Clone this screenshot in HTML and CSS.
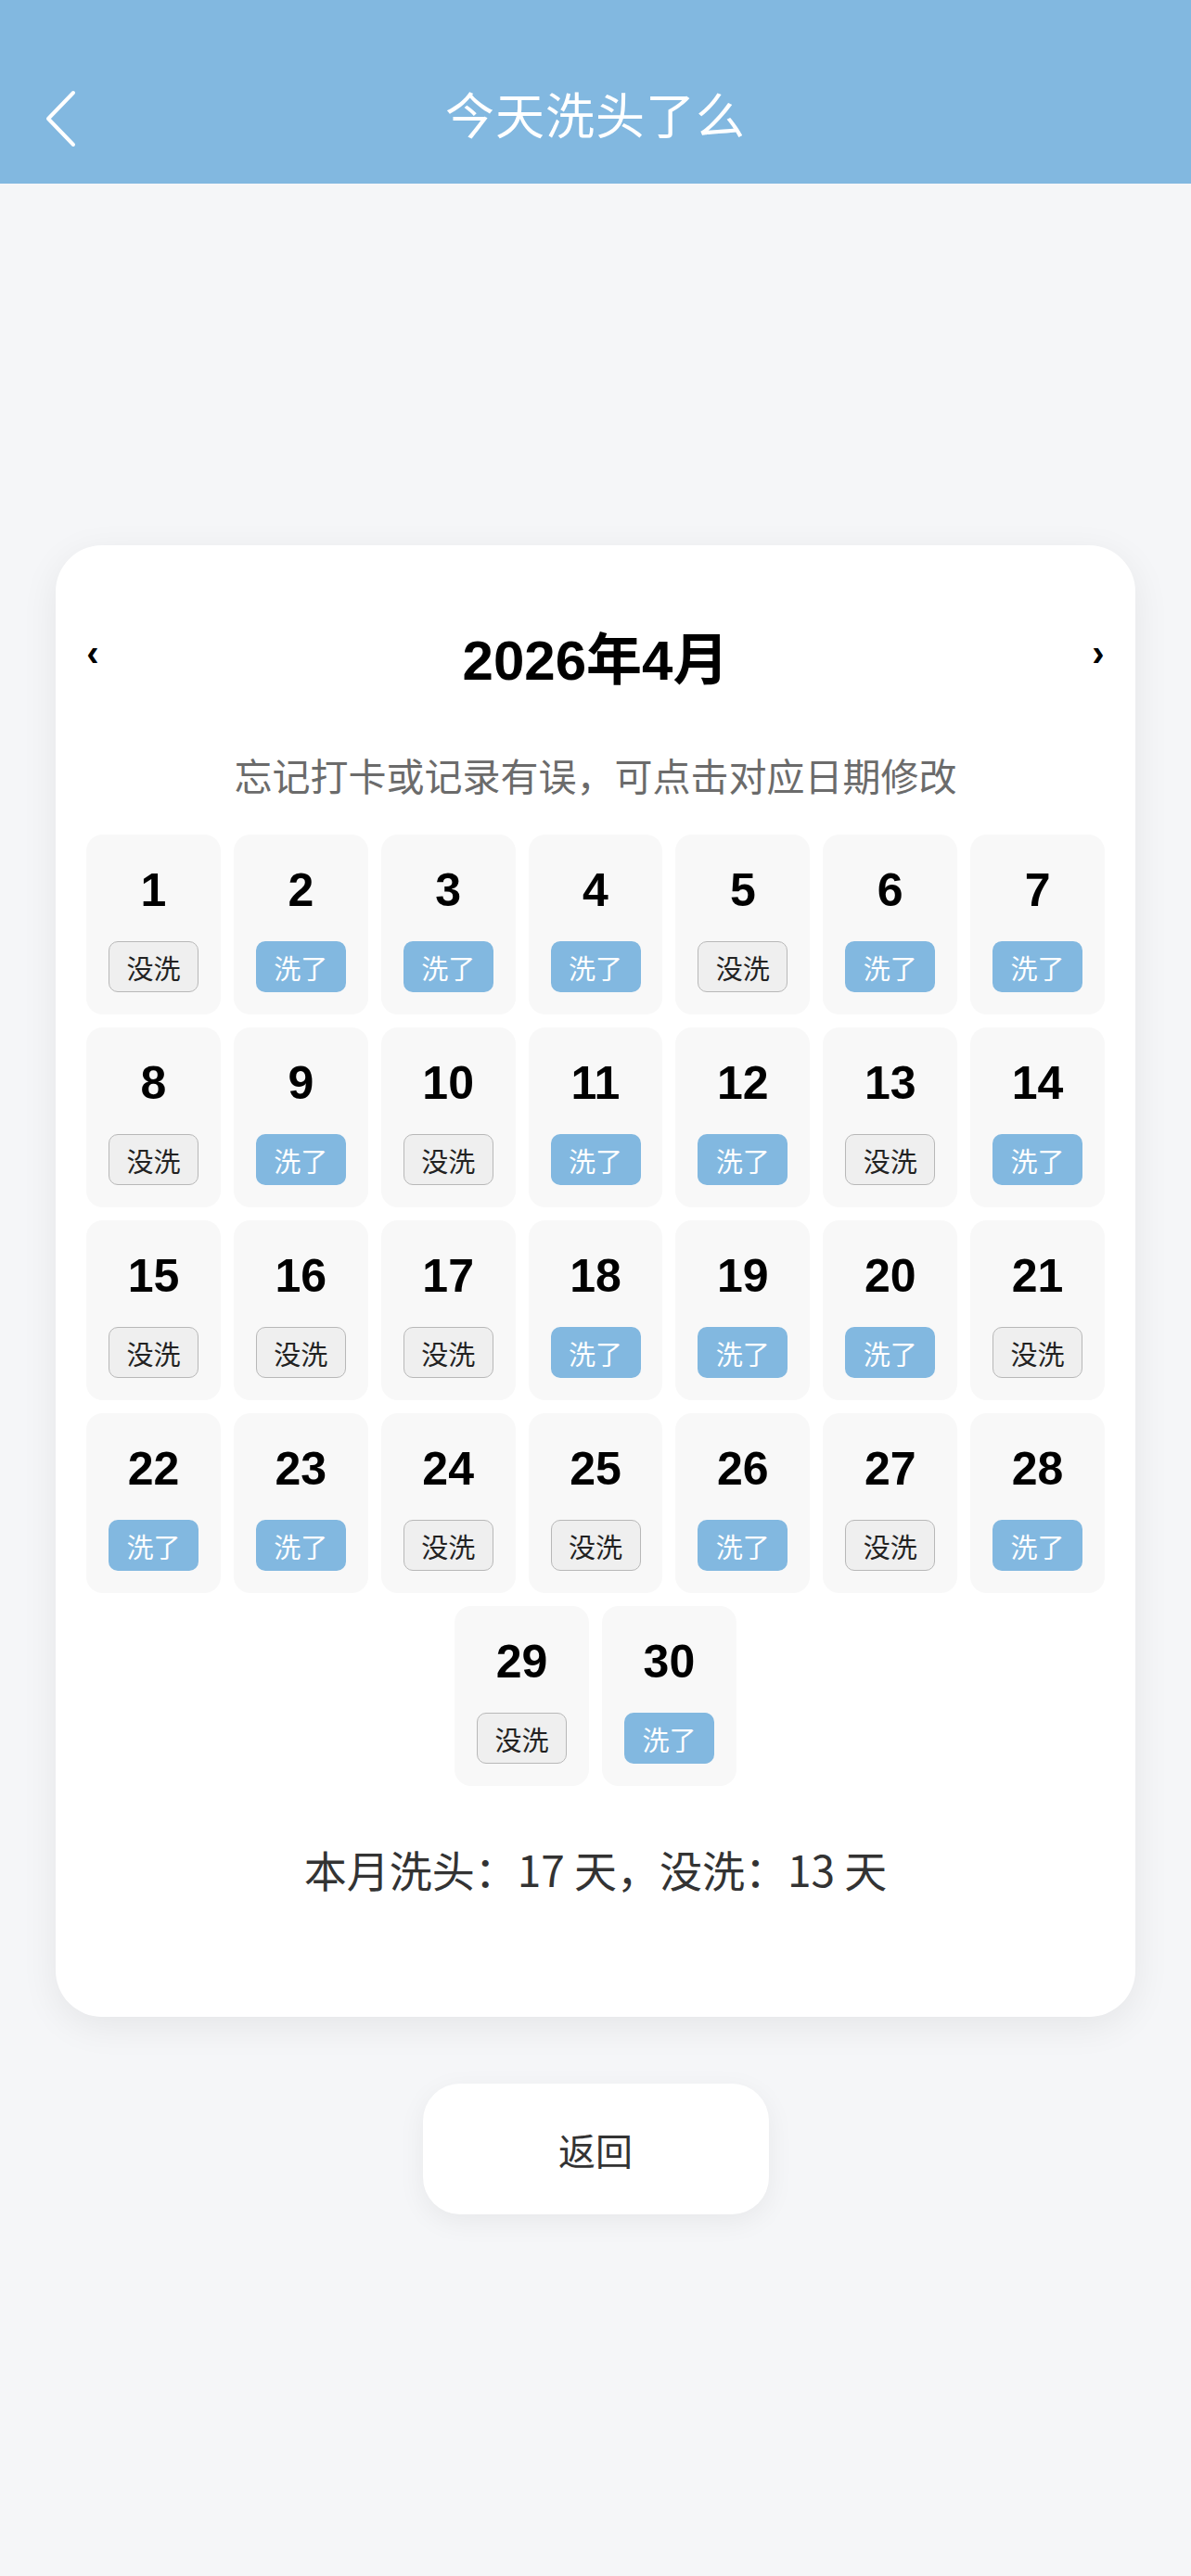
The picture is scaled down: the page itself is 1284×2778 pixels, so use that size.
FILE: index.html
```html
<!DOCTYPE html>
<html lang="zh-CN">
<head>
    <meta charset="UTF-8">
    <meta name="viewport" content="width=device-width, initial-scale=1.0">
    <title>今天洗头了么</title>
    <link rel="stylesheet" href="styles.css">
</head>
<body>
    <!-- Top Bar -->
    <div class="topbar">
        <span class="back-arrow">
            <svg width="40" height="64" viewBox="0 0 40 64"><polyline points="31,5 4,33 31,61" fill="none" stroke="#fff" stroke-width="4" stroke-linecap="round" stroke-linejoin="round"/></svg>
        </span>
        <div class="topbar-title">今天洗头了么</div>
    </div>

    <div class="page">
        <!-- Calendar Card -->
        <div class="card">
            <div class="month-row">
                <span class="month-nav">‹</span>
                <span class="month-title">2026年4月</span>
                <span class="month-nav">›</span>
            </div>
            <div class="hint">忘记打卡或记录有误，可点击对应日期修改</div>

            <div class="days">
                <div class="day"><div class="num">1</div><span class="tag no">没洗</span></div>
                <div class="day"><div class="num">2</div><span class="tag yes">洗了</span></div>
                <div class="day"><div class="num">3</div><span class="tag yes">洗了</span></div>
                <div class="day"><div class="num">4</div><span class="tag yes">洗了</span></div>
                <div class="day"><div class="num">5</div><span class="tag no">没洗</span></div>
                <div class="day"><div class="num">6</div><span class="tag yes">洗了</span></div>
                <div class="day"><div class="num">7</div><span class="tag yes">洗了</span></div>

                <div class="day"><div class="num">8</div><span class="tag no">没洗</span></div>
                <div class="day"><div class="num">9</div><span class="tag yes">洗了</span></div>
                <div class="day"><div class="num">10</div><span class="tag no">没洗</span></div>
                <div class="day"><div class="num">11</div><span class="tag yes">洗了</span></div>
                <div class="day"><div class="num">12</div><span class="tag yes">洗了</span></div>
                <div class="day"><div class="num">13</div><span class="tag no">没洗</span></div>
                <div class="day"><div class="num">14</div><span class="tag yes">洗了</span></div>

                <div class="day"><div class="num">15</div><span class="tag no">没洗</span></div>
                <div class="day"><div class="num">16</div><span class="tag no">没洗</span></div>
                <div class="day"><div class="num">17</div><span class="tag no">没洗</span></div>
                <div class="day"><div class="num">18</div><span class="tag yes">洗了</span></div>
                <div class="day"><div class="num">19</div><span class="tag yes">洗了</span></div>
                <div class="day"><div class="num">20</div><span class="tag yes">洗了</span></div>
                <div class="day"><div class="num">21</div><span class="tag no">没洗</span></div>

                <div class="day"><div class="num">22</div><span class="tag yes">洗了</span></div>
                <div class="day"><div class="num">23</div><span class="tag yes">洗了</span></div>
                <div class="day"><div class="num">24</div><span class="tag no">没洗</span></div>
                <div class="day"><div class="num">25</div><span class="tag no">没洗</span></div>
                <div class="day"><div class="num">26</div><span class="tag yes">洗了</span></div>
                <div class="day"><div class="num">27</div><span class="tag no">没洗</span></div>
                <div class="day"><div class="num">28</div><span class="tag yes">洗了</span></div>

                <div class="day"><div class="num">29</div><span class="tag no">没洗</span></div>
                <div class="day"><div class="num">30</div><span class="tag yes">洗了</span></div>
            </div>

            <div class="summary">本月洗头：17 天，没洗：13 天</div>
        </div>

        <button class="back-btn">返回</button>
    </div>
</body>
</html>
```

FILE: styles.css
```css
body {
    margin: 0;
    padding: 0;
    background-color: #f5f6f8;
    font-family: "Liberation Sans", "Noto Sans CJK SC", sans-serif;
    color: #333;
}
.topbar {
    position: relative;
    height: 198px;
    background-color: #82b8e0;
    display: flex;
    align-items: center;
    justify-content: center;
}
.back-arrow {
    position: absolute;
    left: 48px;
    top: 95px;
    display: flex;
}
.topbar-title {
    margin-top: 46px;
    font-family: "Noto Sans CJK SC", sans-serif;
    font-size: 53px;
    color: #fff;
    letter-spacing: 1px;
}
.page {
    min-height: calc(100vh - 198px);
    box-sizing: border-box;
    padding: 0 60px;
    display: flex;
    flex-direction: column;
    align-items: center;
    justify-content: center;
}
.card {
    width: 100%;
    box-sizing: border-box;
    background-color: #fff;
    border-radius: 50px;
    padding: 33px 33px 128px;
    box-shadow: 0 10px 40px rgba(0, 0, 0, 0.07);
}
.month-row {
    margin-top: 40px;
    height: 90px;
    display: flex;
    align-items: center;
    justify-content: space-between;
}
.month-nav {
    font-size: 40px;
    font-weight: bold;
    color: #000;
    width: 14px;
    text-align: center;
    margin-top: -4px;
}
.month-title {
    font-size: 60px;
    font-weight: bold;
    color: #000;
}
.hint {
    margin-top: 56px;
    text-align: center;
    font-family: "Noto Sans CJK SC", sans-serif;
    font-size: 41px;
    line-height: 57px;
    color: #6b6b6b;
}
.days {
    margin-top: 36px;
    display: flex;
    flex-wrap: wrap;
    justify-content: center;
    gap: 14px;
}
.day {
    flex: 0 0 calc((100% - 84px) / 7);
    height: 194px;
    box-sizing: border-box;
    padding-top: 30px;
    background-color: #f8f8f8;
    border-radius: 18px;
    display: flex;
    flex-direction: column;
    align-items: center;
}
.num {
    font-size: 50px;
    line-height: 60px;
    font-weight: 600;
    color: #000;
}
.tag {
    margin-top: 25px;
    width: 97px;
    height: 55px;
    box-sizing: border-box;
    border-radius: 10px;
    display: flex;
    align-items: center;
    justify-content: center;
    font-family: "Noto Sans CJK SC", sans-serif;
    font-size: 29px;
}
.tag.no {
    background-color: #efefef;
    border: 1px solid #b8b8b8;
    color: #222;
}
.tag.yes {
    background-color: #82b8e0;
    color: #fff;
}
.summary {
    margin-top: 57px;
    text-align: center;
    font-family: "Noto Sans CJK SC", sans-serif;
    font-size: 46px;
    line-height: 64px;
    color: #333;
}
.back-btn {
    margin-top: 72px;
    width: 373px;
    height: 141px;
    border: none;
    border-radius: 40px;
    background-color: #fff;
    box-shadow: 0 8px 30px rgba(0, 0, 0, 0.06);
    font-family: "Noto Sans CJK SC", sans-serif;
    font-size: 40px;
    color: #333;
    cursor: pointer;
}
```
